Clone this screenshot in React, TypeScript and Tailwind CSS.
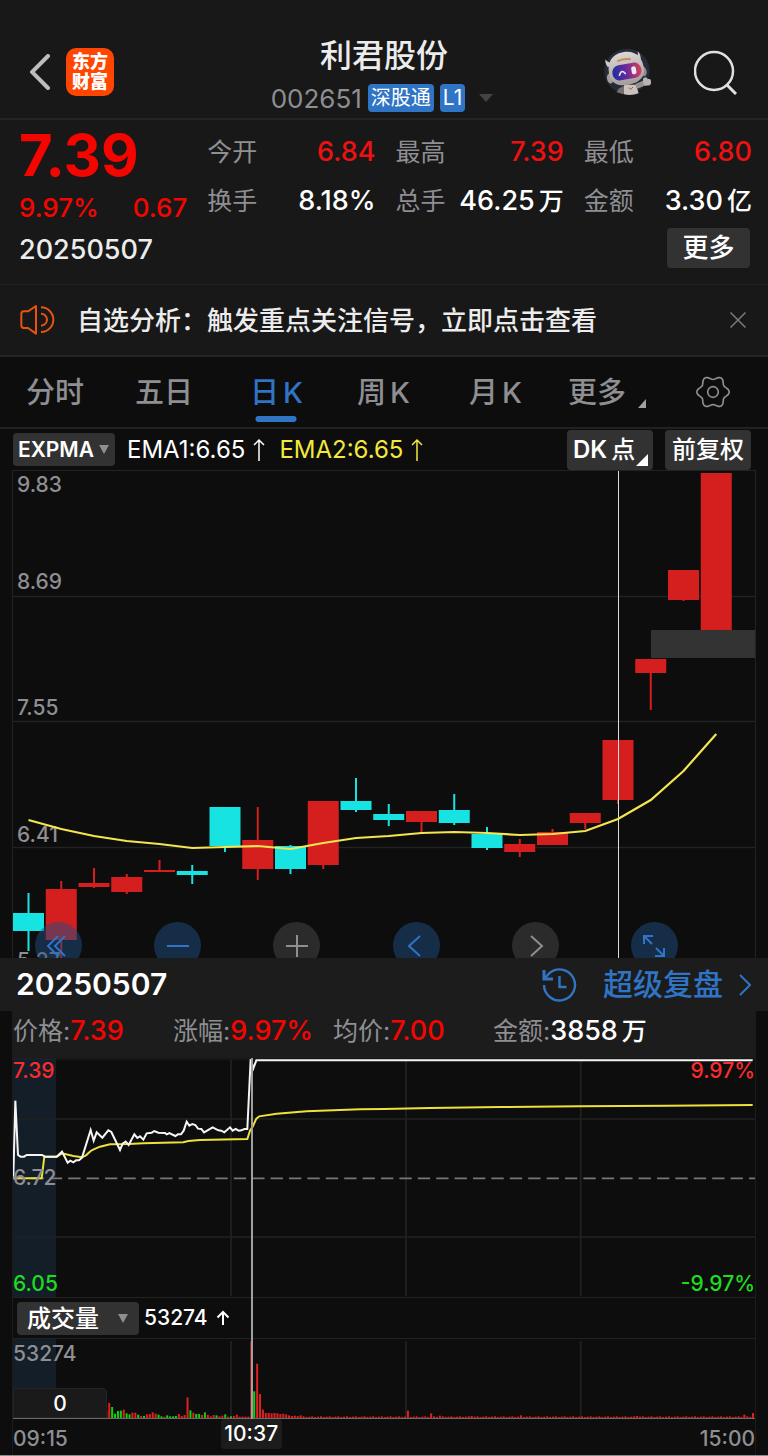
import { useState, type ReactNode } from 'react';

type Candle = { open: number; close: number; high: number; low: number; up: boolean };

// y values on the 488px tall daily chart: body top, body bottom, wick top, wick bottom
const c = (open: number, close: number, high: number, low: number, up = true): Candle => ({ open, close, high, low, up });

const candles: Candle[] = [
  c(443, 461, 423, 481, false),
  c(419, 470, 411, 488),
  c(413, 417, 398, 418),
  c(407, 422, 404, 424),
  c(400, 402, 390, 402),
  c(401, 405, 395, 414, false),
  c(337, 376, 337, 382, false),
  c(370, 399, 337, 410),
  c(376, 399, 375, 404, false),
  c(331, 395, 331, 399),
  c(331, 340, 308, 342, false),
  c(344, 350, 334, 356, false),
  c(341, 352, 341, 364),
  c(340, 353, 324, 355, false),
  c(364, 378, 357, 380, false),
  c(374, 382, 369, 387),
  c(362, 375, 359, 375),
  c(343, 353, 343, 359),
  c(270, 330, 270, 334),
  c(189, 203, 189, 240),
  c(100, 130, 100, 131),
  c(3, 160, 3, 160),
];

const ema = [350, 359, 366, 371, 374, 378, 377, 376, 379, 373, 368, 366, 363, 362, 363, 365, 364, 361, 349, 330, 301, 264];

const candleX = (i: number) => 15.5 + i * 32.75;

// minute line, three units to a pixel
const priceLine =
  '40,500 46,272 54,435 62,440 72,440 80,435 126,435 135,440 170,440 186,425 203,458 211,452 220,457 228,451 237,451 246,443 272,360 281,392 290,367 307,383 325,361 334,366 360,420 368,401 377,395 386,405 403,373 412,384 420,379 430,389 440,370 455,368 463,363 475,368 495,369 500,373 508,369 526,378 534,373 543,373 551,362 560,335 568,347 577,342 586,345 594,356 604,357 612,367 638,352 655,361 664,362 673,367 690,352 698,362 707,357 716,362 724,361 733,357 742,357 752,148 760,175 769,151 2258,151';

const averageLine =
  '40,505 125,505 133,440 170,440 186,430 220,438 246,442 258,436 272,423 281,418 300,410 330,403 386,402 430,400 460,399 550,397 565,393 600,390 742,387 750,362 758,350 769,326 778,319 830,311 920,304 1080,298 1152,297 1290,294 1500,291 1740,289 2000,287 2258,285';

const volumes =
  'r22 r45 g33 g13 g21 g22 r25 g14 g11 r16 r16 g10 r6 g6 r11 r12 r17 r13 g10 g5 r4 g8 g5 g5 g6 r12 r6 r9 r62 g23 r16 g12 g12 r9 g17 r10 r5 r9 g8 r5 r7 g11 r4 g5 r6 r10 r4 r4 r4 r4 r230 g80 r163 r72 r25 r15 r15 r14 r15 r14 r12 r13 r11 r8 r6 r7 r6 r8'.split(' ');

const spikes: Record<number, number> = { 104: 22, 112: 14, 115: 7, 126: 6, 143: 8, 183: 6, 220: 10, 223: 15 };

const volumeBars = Array.from({ length: 224 }, (_, i) => {
  const v = volumes[i];
  if (v) return { up: v[0] === 'r', height: Number(v.slice(1)) };
  return { up: true, height: spikes[i] ?? 3 + ((i * 7) % 3) };
});

const gearPath =
  Array.from({ length: 72 }, (_, i) => {
    const a = (i / 72) * Math.PI * 2;
    const r = 43 + 5.5 * Math.cos(6 * a);
    return `${i ? 'L' : 'M'}${(51 + r * Math.cos(a)).toFixed(1)} ${(51 + r * Math.sin(a)).toFixed(1)}`;
  }).join('') + 'Z';

const quotes = [
  { label: '今开', value: '6.84', red: true },
  { label: '最高', value: '7.39', red: true },
  { label: '最低', value: '6.80', red: true },
  { label: '换手', value: '8.18%' },
  { label: '总手', value: '46.25', unit: '万' },
  { label: '金额', value: '3.30', unit: '亿' },
];

const tabs = [
  { text: '分时' },
  { text: '五日' },
  { text: '日', latin: 'K' },
  { text: '周', latin: 'K' },
  { text: '月', latin: 'K' },
];

function Robot() {
  return (
    <svg viewBox="0 0 144 140" className="h-12 w-12">
      <defs>
        <linearGradient id="visor" x1="0" y1="0" x2="1" y2="0">
          <stop offset="0" stopColor="#1d2fa0" />
          <stop offset="0.5" stopColor="#6a2a9c" />
          <stop offset="1" stopColor="#d8405a" />
        </linearGradient>
        <linearGradient id="shell" x1="0" y1="0" x2="0" y2="1">
          <stop offset="0" stopColor="#dcd6d3" />
          <stop offset="1" stopColor="#a39c9a" />
        </linearGradient>
      </defs>
      <circle cx="69" cy="68" r="68" fill="#262b3a" />
      <path d="M58 112 L44 120 L38 131 L58 137 L66 124 Z" fill="#77706e" />
      <path d="M60 108 H96 L104 134 Q82 142 60 137 Z" fill="#c9c2bf" />
      <path d="M74 117 L80 122 L87 115" fill="none" stroke="#b4573a" strokeWidth="3" />
      <path d="M94 106 L122 94 L128 108 L100 120 Z" fill="#989190" />
      <path d="M118 88 Q128 82 130 90 L139 92 Q144 102 138 110 L122 111 Q114 102 118 88 Z" fill="#b9b4b3" />
      <path d="M4 32 Q3 46 12 56 L26 42 Q12 44 4 32 Z" fill="#cfc8c5" />
      <path d="M101 8 Q112 18 110 36 L94 26 Q104 20 101 8 Z" fill="#cfc8c5" />
      <ellipse cx="18" cy="90" rx="9" ry="15" fill="#a49d9b" transform="rotate(-12 18 90)" />
      <ellipse cx="119" cy="68" rx="9" ry="15" fill="#8f8886" transform="rotate(-12 119 68)" />
      <g transform="rotate(-10 66 64)">
        <path d="M66 10 C104 10 120 34 120 66 C120 96 98 109 66 109 C34 109 14 96 14 66 C14 34 30 10 66 10 Z" fill="url(#shell)" />
        <rect x="24" y="46" width="88" height="46" rx="22" fill="url(#visor)" />
        <path d="M44 76 Q53 58 62 74" fill="none" stroke="#e7e2f0" strokeWidth="5" strokeLinecap="round" />
        <rect x="82" y="57" width="14" height="24" rx="6" fill="#efe6ee" />
      </g>
      <path d="M40 38 Q58 28 80 32" fill="none" stroke="#c88a52" strokeWidth="6" />
    </svg>
  );
}

function Chevron({ className, d }: { className: string; d: string }) {
  return (
    <svg viewBox="0 0 12 22" className={className} fill="none" stroke="currentColor" strokeWidth="2">
      <path d={d} />
    </svg>
  );
}

function UpArrow({ className }: { className: string }) {
  return (
    <svg viewBox="0 0 12 24" className={className} fill="none" stroke="currentColor" strokeWidth="1.5">
      <path d="M6 23V2M1 7l5-5 5 5" />
    </svg>
  );
}

function RoundButton({ label, blue, children }: { label: string; blue?: boolean; children: ReactNode }) {
  return (
    <button
      aria-label={label}
      className={`flex size-[47px] items-center justify-center rounded-full ${blue ? 'bg-[#1e4d80]/50 text-[#2f74c5]' : 'bg-[#2b2b2b] text-[#8e8e93]'}`}
    >
      <svg viewBox="0 0 30 30" className="size-[30px]" fill="none" stroke="currentColor" strokeWidth="2">
        {children}
      </svg>
    </button>
  );
}

function Header() {
  return (
    <header className="grid h-[120px] grid-cols-[1fr_auto_1fr] items-start border-b-2 border-[#242424] bg-[#181818] px-[30px]">
      <div className="flex items-center gap-4 pt-12">
        <button aria-label="返回" className="text-[#bdbdbd]">
          <svg viewBox="0 0 20 36" className="h-9 w-5" fill="none" stroke="currentColor" strokeWidth="4">
            <path d="M18 2L2 18l16 16" strokeLinecap="round" />
          </svg>
        </button>
        <div className="flex size-12 flex-col items-center justify-center rounded-[10px] bg-[#ff4600] text-lg leading-5 font-black text-white">
          <span>东方</span>
          <span>财富</span>
        </div>
      </div>
      <div className="flex flex-col items-center pt-9">
        <h1 className="text-[32px] leading-10 font-medium text-[#ececec]">利君股份</h1>
        <div className="flex h-11 items-center gap-[6px] pr-1">
          <span className="text-[26px] text-[#8e8e93]">002651</span>
          <span className="flex h-7 items-center rounded-[4px] bg-[#2f74c5] px-[3px] text-xl text-white">深股通</span>
          <span className="flex h-7 items-center rounded-[4px] bg-[#2f74c5] px-[3px] text-[21px] text-white">L1</span>
          <svg viewBox="0 0 14 8" className="ml-2 h-2 w-[14px]">
            <path d="M0 0h14L7 8z" fill="#444" />
          </svg>
        </div>
      </div>
      <div className="flex items-center justify-end gap-[42px] pt-12">
        <Robot />
        <button aria-label="搜索" className="text-[#e0e0e0]">
          <svg viewBox="0 0 44 46" className="h-[46px] w-11" fill="none" stroke="currentColor" strokeWidth="2.5">
            <circle cx="20" cy="22" r="19" />
            <path d="M32.500 35.500L42 45" strokeWidth="3" />
          </svg>
        </button>
      </div>
    </header>
  );
}

function Quote() {
  return (
    <section className="border-b border-[#202020] bg-[#181818] pr-4 pb-4 pl-[19px]">
      <div className="grid grid-cols-4 gap-x-5">
        <div className="text-[#f50500]">
          <div className="text-[58px] leading-[70px] font-bold">7.39</div>
          <div className="flex justify-between text-[26px] leading-9 font-medium">
            <span>9.97%</span>
            <span>0.67</span>
          </div>
        </div>
        <dl className="col-span-3 grid grid-cols-3 gap-x-5 pt-2 leading-[48px]">
          {quotes.map((q) => (
            <div key={q.label} className="flex justify-between">
              <dt className="text-[25px] text-[#8e8e93]">{q.label}</dt>
              <dd className={`flex gap-1 text-[27px] font-medium ${q.red ? 'text-[#ee1111]' : 'text-white'}`}>
                {q.value}
                {q.unit && <span className="text-[25px]">{q.unit}</span>}
              </dd>
            </div>
          ))}
        </dl>
      </div>
      <div className="flex items-end justify-between pt-[2px] pr-[2px]">
        <span className="text-[27px] leading-9 font-medium text-[#ececec]">20250507</span>
        <button className="h-10 w-[83px] rounded-[4px] bg-[#323232] text-[26px] leading-10 font-medium text-white">更多</button>
      </div>
    </section>
  );
}

function Banner() {
  return (
    <section className="flex h-[72px] items-center border-b-2 border-[#242424] bg-[#181818] pr-[21px] pl-[19px]">
      <svg viewBox="58 56 108 96" className="h-8 w-9" fill="none" stroke="#e8530f" strokeWidth="6">
        <path d="M109 62V145L85 128H72Q65 128 65 120V86Q65 78 72 78H85Z" strokeLinejoin="round" />
        <path d="M124 66A37 37 0 0 1 124 140M124 85A18 18 0 0 1 124 121" />
      </svg>
      <a href="#analysis" className="ml-[22px] flex-1 text-[26px] font-medium text-[#ececec]">
        自选分析：触发重点关注信号，立即点击查看
      </a>
      <button aria-label="关闭" className="text-[#7a7a7a]">
        <svg viewBox="0 0 18 18" className="size-[18px]" fill="none" stroke="currentColor" strokeWidth="1.5">
          <path d="M1.500 1.500l15 15M16.500 1.500l-15 15" />
        </svg>
      </button>
    </section>
  );
}

function Tabs() {
  const [active, setActive] = useState(2);
  return (
    <nav className="grid h-[72px] grid-cols-[109fr_115fr_107fr_112fr_99fr_128fr_72fr] border-b-2 border-[#222] pl-[26px] text-[29px] font-medium text-[#8e8e93]">
      {tabs.map((t, i) => (
        <button
          key={t.text}
          onClick={() => setActive(i)}
          className={`relative flex items-center gap-1 justify-self-start pt-[2px] ${i === active ? 'text-[#2f74c5]' : ''}`}
        >
          {t.text}
          {t.latin && <span>{t.latin}</span>}
          {i === active && <span className="absolute bottom-[5px] left-1/2 h-[6px] w-[41px] -translate-x-1/2 rounded-full bg-[#2f74c5]" />}
        </button>
      ))}
      <button className="flex items-center gap-3 justify-self-start pt-[2px]">
        更多
        <svg viewBox="0 0 8 9" className="mt-5 h-[9px] w-2">
          <path d="M8 0v9H0z" fill="#a0a0a0" />
        </svg>
      </button>
      <button aria-label="设置" className="justify-self-start">
        <svg viewBox="0 0 102 102" className="size-[34px]" fill="none" stroke="currentColor" strokeWidth="5">
          <path d={gearPath} />
          <circle cx="51" cy="51" r="16" />
        </svg>
      </button>
    </nav>
  );
}

function Picker({ label, value, className, arrow }: { label: string; value: string; className: string; arrow: string }) {
  return (
    <div className="relative flex items-center">
      <select aria-label={label} className={`appearance-none rounded-[4px] bg-[#323232] text-white ${className}`}>
        <option>{value}</option>
      </select>
      <svg viewBox="0 0 10 9" className={`pointer-events-none absolute h-[9px] w-[10px] ${arrow}`}>
        <path d="M0 0h10L5 9z" fill="#8e8e93" />
      </svg>
    </div>
  );
}

function IndicatorBar() {
  return (
    <div className="flex h-[41px] items-center pr-[17px] pl-[13px] text-2xl">
      <Picker label="指标" value="EXPMA" className="h-[33px] w-[102px] pl-[5px] text-[21px] font-semibold" arrow="right-[6px]" />
      <span className="ml-3 text-white">EMA1:6.65</span>
      <UpArrow className="ml-2 h-6 w-3 text-white" />
      <span className="ml-[14px] text-[#f3e83c]">EMA2:6.65</span>
      <UpArrow className="ml-2 h-6 w-3 text-[#f3e83c]" />
      <button className="relative ml-auto flex h-10 w-[86px] items-center gap-1 rounded-[4px] bg-[#323232] pl-[6px] font-semibold text-white">
        DK<span className="font-medium">点</span>
        <svg viewBox="0 0 12 12" className="absolute right-[5px] bottom-1 size-3">
          <path d="M12 0v12H0z" fill="#fff" />
        </svg>
      </button>
      <button className="ml-3 h-10 w-[86px] rounded-[4px] bg-[#323232] font-medium text-white">前复权</button>
    </div>
  );
}

function DailyChart() {
  return (
    <section className="relative mx-3 h-[488px] overflow-hidden border-x border-t border-[#222]">
      <div className="absolute inset-x-0 top-0 text-[21px] leading-7 font-medium text-[#8e8e93]">
        <span className="absolute top-0 left-1">9.83</span>
        <span className="absolute top-[97px] left-1">8.69</span>
        <span className="absolute top-[223px] left-1">7.55</span>
        <span className="absolute top-[350px] left-1">6.41</span>
        <span className="absolute top-[476px] left-1">5.27</span>
      </div>
      <svg viewBox="0 0 742 488" preserveAspectRatio="none" className="relative -mt-px h-[488px] w-full">
        <path d="M0 126.500H742M0 251.500H742M0 377.500H742" stroke="#222" strokeWidth="1.5" />
        <rect x="638" y="160" width="104" height="28" fill="#333" />
        {candles.map((k, i) => (
          <g key={i} fill={k.up ? '#d51f1f' : '#18e3e3'}>
            <rect x={candleX(i) - 15.5} y={k.open} width="31" height={k.close - k.open} />
            <rect x={candleX(i) - 1} y={k.high} width="2" height={k.low - k.high} />
          </g>
        ))}
        <path d="M605.500 0V488" stroke="#ddd" />
        <polyline points={ema.map((y, i) => `${candleX(i)},${y}`).join(' ')} fill="none" stroke="#f3e650" strokeWidth="2.2" />
      </svg>
      <div className="absolute inset-x-0 top-[451px] flex justify-between pr-[77px] pl-[22px]">
        <RoundButton label="最早" blue>
          <path d="M14 5L4 15l10 10M21 5L11 15l10 10" />
        </RoundButton>
        <RoundButton label="缩小" blue>
          <path d="M4 15h22" />
        </RoundButton>
        <RoundButton label="放大">
          <path d="M4 15h22M15 4v22" />
        </RoundButton>
        <RoundButton label="向左" blue>
          <path d="M19 5L8 15l11 10" />
        </RoundButton>
        <RoundButton label="向右">
          <path d="M11 5l11 10-11 10" />
        </RoundButton>
        <RoundButton label="全屏" blue>
          <path d="M5 13V5h9M5 5l8 8M25 17v8h-9M25 25l-8-8" />
        </RoundButton>
      </div>
    </section>
  );
}

function ReviewHeader() {
  return (
    <div className="flex h-[53px] items-center justify-between bg-[#1c1c1c] pr-[17px] pl-4">
      <span className="text-[30px] font-semibold text-white">20250507</span>
      <a href="#replay" className="flex items-center text-[30px] font-medium text-[#2f74c5]">
        <svg viewBox="0 0 36 36" className="size-9" fill="none" stroke="currentColor" strokeWidth="2.4">
          <path d="M3 18A15.500 15.500 0 1 0 8 6.500L4 11" />
          <path d="M3 3v9h9" strokeWidth="3" />
          <path d="M18.500 9v11h7" />
        </svg>
        <span className="ml-[26px]">超级复盘</span>
        <Chevron className="ml-4 h-[22px] w-3" d="M1 1l10 10L1 21" />
      </a>
    </div>
  );
}

function Stat({ label, value, unit, white }: { label: string; value: string; unit?: string; white?: boolean }) {
  return (
    <div className="flex items-center">
      <span className="text-[#8e8e93]">{label}:</span>
      <span className={`text-[27px] font-medium ${white ? 'text-white' : 'text-[#f50500]'}`}>{value}</span>
      {unit && <span className="ml-1 font-medium text-white">{unit}</span>}
    </div>
  );
}

function IntradayChart() {
  return (
    <div className="relative h-60 border-b border-[#222]">
      <div className="absolute inset-y-0 left-0 w-[43px] bg-[#131e29]" />
      <svg viewBox="39 144 2226 720" preserveAspectRatio="none" className="relative h-60 w-full" fill="none">
        <path d="M39 327H2265M39 681H2265M693 150V858M1218 150V858M1742 150V858" stroke="#222" strokeWidth="5" />
        <path d="M39 147H2265" stroke="#222" strokeWidth="3" />
        <path d="M39 505H2265" stroke="#77777a" strokeWidth="5" strokeDasharray="37 18.2" />
        <polyline points={averageLine} stroke="#efe03c" strokeWidth="6" />
        <polyline points={priceLine} stroke="#f5f5f5" strokeWidth="6" />
      </svg>
      <div className="absolute inset-0 flex justify-between text-[21px] leading-[26px] font-medium">
        <div className="flex flex-col justify-between">
          <span className="text-[#ff2b2b]">7.39</span>
          <span className="text-[#8e8e93]">6.72</span>
          <span className="text-[#1fdc1f]">6.05</span>
        </div>
        <div className="flex flex-col justify-between text-right">
          <span className="text-[#ff2b2b]">9.97%</span>
          <span className="text-[#1fdc1f]">-9.97%</span>
        </div>
      </div>
    </div>
  );
}

function VolumeChart() {
  return (
    <div className="relative h-[81px] border-y border-t-[#222] border-b-[#6a6a6a]">
      <div className="absolute inset-y-0 left-0 w-[43px] bg-[#131e29]" />
      <svg viewBox="0 0 2226 237" preserveAspectRatio="none" className="relative h-[79px] w-full">
        <path d="M654 6V237M1179 6V237M1703 6V237" stroke="#222" strokeWidth="5" />
        {volumeBars.map((b, i) => (
          <rect key={i} x={277 + i * 8.7} y={237 - b.height} width="6" height={b.height} fill={b.up ? '#e02020' : '#10d010'} />
        ))}
      </svg>
      <span className="absolute top-[2px] left-0 text-[21px] leading-[26px] font-medium text-[#8e8e93]">53274</span>
      <span className="absolute bottom-0 left-0 h-[30px] w-[94px] rounded-tr-[4px] border border-[#242424] bg-[#1a1a1a] text-center text-[21px] leading-[30px] font-medium text-white">
        0
      </span>
    </div>
  );
}

function Replay() {
  return (
    <section className="mx-3 border-x border-[#1c1c1c]">
      <div className="grid h-[47px] grid-cols-[160fr_160fr_160fr_262fr] bg-[#1c1c1c] pb-3 text-[25px]">
        <Stat label="价格" value="7.39" />
        <Stat label="涨幅" value="9.97%" />
        <Stat label="均价" value="7.00" />
        <Stat label="金额" value="3858" unit="万" white />
      </div>
      <div className="relative">
        <IntradayChart />
        <div className="flex h-10 items-center pl-1 text-[21px] font-medium text-white">
          <Picker label="副图指标" value="成交量" className="h-[33px] w-[122px] pl-[10px] text-2xl leading-[33px]" arrow="right-[11px]" />
          <span className="ml-[5px]">53274</span>
          <svg viewBox="0 0 14 16" className="ml-2 h-4 w-[14px]" fill="none" stroke="currentColor" strokeWidth="2">
            <path d="M7 15V2M1.500 7.500L7 2l5.500 5.500" />
          </svg>
        </div>
        <VolumeChart />
        <div className="absolute inset-y-0 left-[32%] ml-px w-[2px] bg-[#a0a0a0]" />
      </div>
      <div className="relative flex h-9 items-center justify-between pt-1 text-[21px] font-medium text-[#8e8e93]">
        <span>09:15</span>
        <span>15:00</span>
        <span className="absolute top-0 left-[28%] h-[30px] w-[61px] rounded-[3px] bg-[#1c1c1c] text-center leading-[30px] text-white">10:37</span>
      </div>
    </section>
  );
}

export default function App() {
  return (
    <main className="border-b border-[#8b8b8b] bg-[#0d0d0d] font-['Inter','Noto_Sans_CJK_SC',sans-serif]">
      <Header />
      <Quote />
      <Banner />
      <Tabs />
      <IndicatorBar />
      <DailyChart />
      <ReviewHeader />
      <Replay />
    </main>
  );
}
